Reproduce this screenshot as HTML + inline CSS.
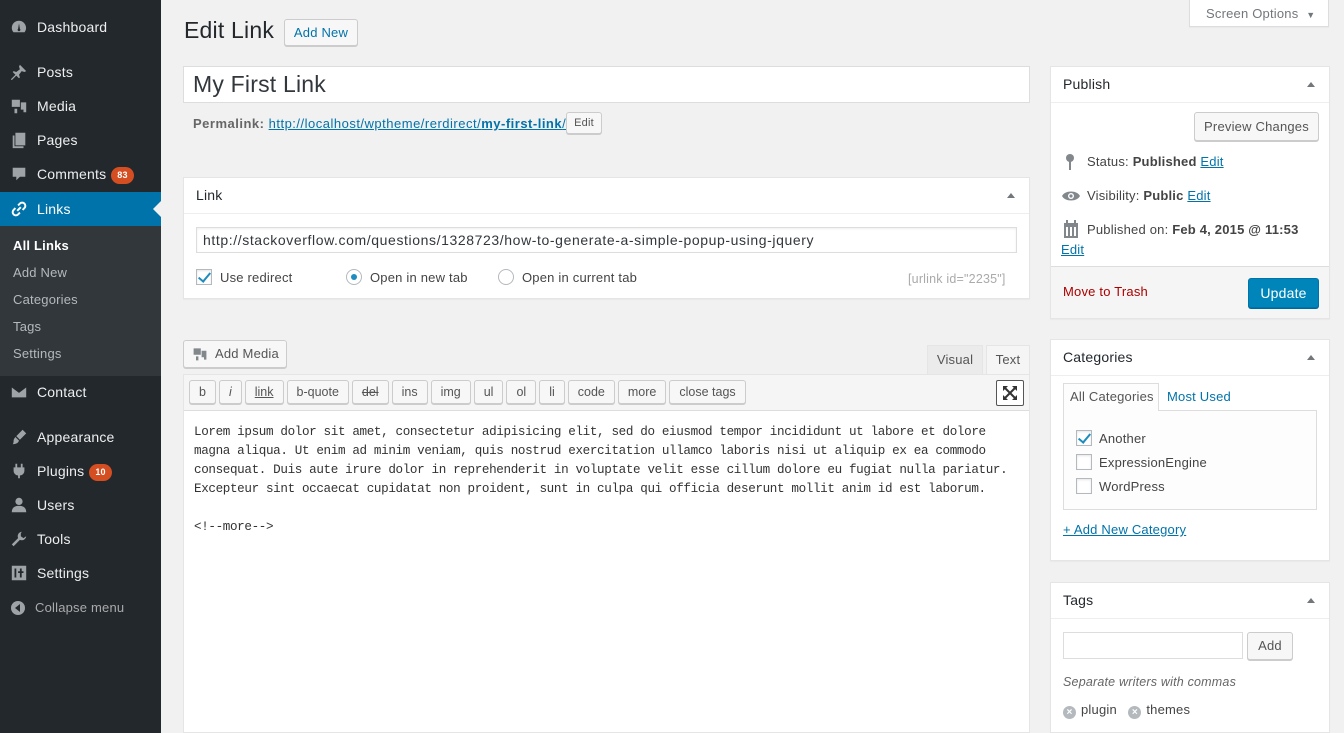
<!DOCTYPE html>
<html><head><meta charset="utf-8"><style>
*{box-sizing:border-box;margin:0;padding:0}
html,body{width:1344px;height:733px;overflow:hidden}
body{background:#f1f1f1;font-family:"Liberation Sans",sans-serif;font-size:13px;color:#444;position:relative;letter-spacing:.2px}
.a{position:absolute}
#side{left:0;top:0;width:161px;height:733px;background:#23282d}
.mi{position:absolute;left:0;width:161px;color:#eee;font-size:14px;height:34px;line-height:34px;padding-left:37px}
.ic{position:absolute;left:10px;top:8px;width:18px;height:18px;fill:#9ea3a8}
.sub{position:absolute;left:13px;color:#b4b9be;font-size:13px}
.badge{display:inline-block;background:#d54e21;color:#fff;font-size:9px;font-weight:bold;border-radius:9px;padding:0 6px;line-height:17px;height:17px;margin-left:5px;vertical-align:1px}
.box{position:absolute;background:#fff;border:1px solid #e5e5e5;box-shadow:0 1px 1px rgba(0,0,0,.04)}
.hd{height:36px;border-bottom:1px solid #eee;font-size:14px;color:#23282d;padding:0 12px;line-height:35px;position:relative}
.hd:after{content:"";position:absolute;right:14px;top:15px;border-left:4px solid transparent;border-right:4px solid transparent;border-bottom:5px solid #72777c}
.btn{position:absolute;background:#f7f7f7;border:1px solid #ccc;border-radius:3px;box-shadow:0 1px 0 #ccc;color:#555;text-align:center}
.tb{display:inline-block;height:24px;line-height:22px;border:1px solid #ccc;border-radius:3px;background:#f7f7f7;box-shadow:0 1px 0 #ccc;padding:0 9px;margin-right:3px;font-size:12.5px;color:#555;vertical-align:top;letter-spacing:0}
a{color:#0073aa}
.cb{position:absolute;width:16px;height:16px;border:1px solid #b4b9be;background:#fff;box-shadow:inset 0 1px 2px rgba(0,0,0,.1)}
.cb.on:after{content:"";position:absolute;left:4px;top:0px;width:5px;height:10px;border:solid #1e8cbe;border-width:0 2px 2px 0;transform:rotate(40deg)}
.rd{position:absolute;width:16px;height:16px;border:1px solid #b4b9be;border-radius:50%;background:#fff}
.x{display:inline-block;width:13px;height:13px;border-radius:50%;background:#b4b9be;color:#fff;font-size:10px;line-height:13px;text-align:center;font-weight:bold;vertical-align:-1px;margin-right:5px}
</style></head><body>
<div id="side" class="a">
 <div class="mi" style="top:10px"><svg class="ic" viewBox="0 0 20 20"><path d="M10 3a8 8 0 0 0-8 8c0 2 .7 3.5 1.8 4.8h12.4A8 8 0 0 0 10 3zm0 3l1 6a1.5 1.5 0 1 1-2 0z"/></svg>Dashboard</div>
 <div class="mi" style="top:55px"><svg class="ic" viewBox="0 0 20 20"><path d="M11 2l7 7-2 1-3-1-3 4 1 3-1 1-3-3-5 5-1-1 5-5-3-3 1-1 3 1 4-3-1-3z"/></svg>Posts</div>
 <div class="mi" style="top:89px"><svg class="ic" viewBox="0 0 20 20"><path d="M2 3h9v8H2zM12 6h6v11h-3v-3h-3zM5 13h3v5H5z"/></svg>Media</div>
 <div class="mi" style="top:123px"><svg class="ic" viewBox="0 0 20 20"><path d="M6 2h11v14H6zM3 5h2v12h10v2H3z"/></svg>Pages</div>
 <div class="mi" style="top:157px"><svg class="ic" viewBox="0 0 20 20"><path d="M3 3h14v10h-6l-4 4v-4H3z"/></svg>Comments<span class="badge">83</span></div>
 <div class="mi" style="top:192px;background:#0073aa;color:#fff"><svg class="ic" viewBox="0 0 20 20" style="fill:none;stroke:#fff;stroke-width:2.2"><path d="M8 12l4-4M9 6l2-2a3 3 0 0 1 5 5l-2 2M11 14l-2 2a3 3 0 0 1-5-5l2-2"/></svg>Links</div>
 <div class="a" style="left:153px;top:201px;border-top:8px solid transparent;border-bottom:8px solid transparent;border-right:8px solid #f1f1f1"></div>
 <div class="a" style="left:0;top:226px;width:161px;height:150px;background:#32373c"></div>
 <div class="sub" style="top:238px;color:#fff;font-weight:bold">All Links</div>
 <div class="sub" style="top:265px">Add New</div>
 <div class="sub" style="top:292px">Categories</div>
 <div class="sub" style="top:319px">Tags</div>
 <div class="sub" style="top:346px">Settings</div>
 <div class="mi" style="top:375px"><svg class="ic" viewBox="0 0 20 20"><path d="M2 5h16v11H2zM2 5l8 6 8-6" /></svg>Contact</div>
 <div class="mi" style="top:420px"><svg class="ic" viewBox="0 0 20 20"><path d="M14 2l4 4-7 7-4-4zM6 10l4 4c-1 3-4 4-7 4 1-1 1-3 1-4s1-3 2-4z"/></svg>Appearance</div>
 <div class="mi" style="top:454px"><svg class="ic" viewBox="0 0 20 20"><path d="M6 2h2v4h4V2h2v4h2v4a5 5 0 0 1-5 5v3H9v-3a5 5 0 0 1-5-5V6h2z"/></svg>Plugins<span class="badge">10</span></div>
 <div class="mi" style="top:488px"><svg class="ic" viewBox="0 0 20 20"><circle cx="10" cy="6" r="4"/><path d="M2 18c0-5 3-7 8-7s8 2 8 7z"/></svg>Users</div>
 <div class="mi" style="top:522px"><svg class="ic" viewBox="0 0 20 20"><path d="M13 2a5 5 0 0 0-4 7l-7 7 2 2 7-7a5 5 0 0 0 7-4l-3 2-3-2v-3z"/></svg>Tools</div>
 <div class="mi" style="top:556px"><svg class="ic" viewBox="0 0 20 20"><path d="M2 2h16v16H2zM5 5v10h2V5zM11 5v3h-2v2h2v5h2v-5h2V8h-2V5z" fill-rule="evenodd"/></svg>Settings</div>
 <div class="mi" style="top:591px;font-size:13px;color:#aaa;padding-left:35px"><div class="a" style="left:11px;top:10px;width:14px;height:14px;border-radius:50%;background:#9ea3a8"></div><div class="a" style="left:15px;top:13px;border-top:4px solid transparent;border-bottom:4px solid transparent;border-right:5px solid #23282d"></div>Collapse menu</div>
</div>

<div class="a" style="left:1189px;top:-1px;width:140px;height:28px;background:#fff;border:1px solid #ddd;box-shadow:0 1px 1px rgba(0,0,0,.04);color:#72777c;line-height:27px;padding-left:16px">Screen Options <span style="font-size:9px;margin-left:4px">▼</span></div>

<div class="a" style="left:184px;top:17px;font-size:23px;color:#23282d">Edit Link</div>
<div class="btn" style="left:284px;top:19px;width:74px;height:27px;line-height:25px;color:#0073aa;border-color:#ccc;font-size:13px">Add New</div>

<div class="a" style="left:183px;top:66px;width:847px;height:37px;background:#fff;border:1px solid #ddd;font-size:23px;color:#32373c;padding-left:9px;line-height:35px">My First Link</div>
<div class="a" style="left:193px;top:116px;color:#666;font-size:13px;letter-spacing:.5px"><b>Permalink:</b> <a href="#">http://localhost/wptheme/rerdirect/<b>my-first-link</b>/</a></div>
<div class="btn" style="left:566px;top:112px;width:36px;height:22px;line-height:20px;font-size:11px">Edit</div>

<div class="box" style="left:183px;top:177px;width:847px;height:122px">
 <div class="hd">Link</div>
 <div class="a" style="left:12px;top:49px;width:821px;height:26px;border:1px solid #ddd;box-shadow:inset 0 1px 2px rgba(0,0,0,.07);padding-left:6px;line-height:24px;font-size:14px;color:#32373c;letter-spacing:.6px">http://stackoverflow.com/questions/1328723/how-to-generate-a-simple-popup-using-jquery</div>
 <div class="cb on" style="left:12px;top:91px"></div><div class="a" style="left:36px;top:92px">Use redirect</div>
 <div class="rd" style="left:162px;top:91px"><div class="a" style="left:4px;top:4px;width:6px;height:6px;border-radius:50%;background:#1e8cbe"></div></div><div class="a" style="left:186px;top:92px">Open in new tab</div>
 <div class="rd" style="left:314px;top:91px"></div><div class="a" style="left:338px;top:92px">Open in current tab</div>
 <div class="a" style="left:724px;top:94px;color:#aaa;font-size:12.5px">[urlink id="2235"]</div>
</div>

<div class="btn" style="left:183px;top:340px;width:104px;height:28px;line-height:26px;padding-left:31px;text-align:left"><svg class="a" style="left:8px;top:5px" width="16" height="16" viewBox="0 0 20 20" fill="#82878c"><path d="M2 3h9v8H2zM12 6h6v11h-3v-3h-3zM5 13h3v5H5z"/></svg>Add Media</div>
<div class="a" style="left:927px;top:345px;width:56px;height:30px;background:#ebebeb;border:1px solid #e5e5e5;border-bottom:0;line-height:28px;text-align:center;color:#555">Visual</div>
<div class="a" style="left:986px;top:345px;width:44px;height:30px;background:#f5f5f5;border:1px solid #e5e5e5;border-bottom:0;line-height:28px;text-align:center;color:#555">Text</div>
<div class="a" style="left:183px;top:374px;width:847px;height:359px;background:#fff;border:1px solid #e5e5e5">
 <div style="height:36px;background:#f5f5f5;border-bottom:1px solid #ddd;padding:5px 0 0 5px">
  <span class="tb">b</span><span class="tb"><i>i</i></span><span class="tb" style="text-decoration:underline">link</span><span class="tb">b-quote</span><span class="tb" style="text-decoration:line-through">del</span><span class="tb">ins</span><span class="tb">img</span><span class="tb">ul</span><span class="tb">ol</span><span class="tb">li</span><span class="tb">code</span><span class="tb">more</span><span class="tb">close tags</span>
 </div>
 <div class="a" style="left:812px;top:5px;width:28px;height:26px;border:1px solid #555;border-radius:2px;background:#fff"><svg width="26" height="24" viewBox="0 0 26 24"><path d="M6 5h5l-5 5zM20 5h-5l5 5zM6 19h5l-5-5zM20 19h-5l5-5z" fill="#333"/><path d="M8 7l10 10M18 7L8 17" stroke="#333" stroke-width="2"/></svg></div>
 <div style="padding:12px 10px;font-family:'Liberation Mono',monospace;font-size:12.6px;line-height:19px;color:#333;letter-spacing:-0.36px;white-space:pre">Lorem ipsum dolor sit amet, consectetur adipisicing elit, sed do eiusmod tempor incididunt ut labore et dolore
magna aliqua. Ut enim ad minim veniam, quis nostrud exercitation ullamco laboris nisi ut aliquip ex ea commodo
consequat. Duis aute irure dolor in reprehenderit in voluptate velit esse cillum dolore eu fugiat nulla pariatur.
Excepteur sint occaecat cupidatat non proident, sunt in culpa qui officia deserunt mollit anim id est laborum.

&lt;!--more--&gt;</div>
</div>

<div class="box" style="left:1050px;top:66px;width:280px;height:253px">
 <div class="hd">Publish</div>
 <div class="btn" style="left:143px;top:45px;width:125px;height:29px;line-height:27px">Preview Changes</div>
 <svg class="a" style="left:12px;top:86px" width="14" height="18" viewBox="0 0 14 18" fill="#82878c"><circle cx="7" cy="5" r="4"/><rect x="6" y="7" width="2" height="10"/></svg>
 <div class="a" style="left:36px;top:87px">Status: <b>Published</b> <a href="#">Edit</a></div>
 <svg class="a" style="left:10px;top:122px" width="20" height="14" viewBox="0 0 20 14"><path d="M1 7c3-6 15-6 18 0-3 6-15 6-18 0z" fill="#82878c"/><circle cx="10" cy="7" r="3" fill="#fff"/><circle cx="10" cy="7" r="1.6" fill="#82878c"/></svg>
 <div class="a" style="left:36px;top:121px">Visibility: <b>Public</b> <a href="#">Edit</a></div>
 <svg class="a" style="left:12px;top:153px" width="16" height="18" viewBox="0 0 16 18" fill="#82878c"><path d="M1 3h14v15H1zM3 7v9h2V7zM7 7v9h2V7zM11 7v9h2V7z" fill-rule="evenodd"/><rect x="3" y="0" width="2" height="4"/><rect x="11" y="0" width="2" height="4"/></svg>
 <div class="a" style="left:36px;top:155px">Published on: <b>Feb 4, 2015 @ 11:53</b></div>
 <div class="a" style="left:10px;top:175px"><a href="#">Edit</a></div>
 <div class="a" style="left:0;top:199px;width:278px;height:52px;background:#f5f5f5;border-top:1px solid #ddd"></div>
 <div class="a" style="left:12px;top:217px;color:#a00">Move to Trash</div>
 <div class="a" style="left:197px;top:211px;width:71px;height:30px;background:#0085ba;border:1px solid #0073aa;border-radius:3px;box-shadow:0 1px 0 #006799;color:#fff;font-size:14px;line-height:28px;text-align:center">Update</div>
</div>

<div class="box" style="left:1050px;top:339px;width:280px;height:222px">
 <div class="hd">Categories</div>
 <div class="a" style="left:12px;top:43px;width:96px;height:28px;border:1px solid #ddd;border-bottom:0;background:#fdfdfd;z-index:2;line-height:26px;padding-left:6px;color:#555">All Categories</div>
 <div class="a" style="left:116px;top:49px;color:#0073aa">Most Used</div>
 <div class="a" style="left:12px;top:70px;width:254px;height:100px;border:1px solid #ddd;background:#fdfdfd"></div>
 <div class="cb on" style="left:25px;top:90px"></div><div class="a" style="left:48px;top:91px">Another</div>
 <div class="cb" style="left:25px;top:114px"></div><div class="a" style="left:48px;top:115px">ExpressionEngine</div>
 <div class="cb" style="left:25px;top:138px"></div><div class="a" style="left:48px;top:139px">WordPress</div>
 <div class="a" style="left:12px;top:182px"><a href="#">+ Add New Category</a></div>
</div>

<div class="box" style="left:1050px;top:582px;width:280px;height:151px">
 <div class="hd">Tags</div>
 <div class="a" style="left:12px;top:49px;width:180px;height:27px;border:1px solid #ddd;background:#fff"></div>
 <div class="btn" style="left:196px;top:49px;width:46px;height:28px;line-height:26px">Add</div>
 <div class="a" style="left:12px;top:92px;font-style:italic;color:#666;font-size:12.5px">Separate writers with commas</div>
 <div class="a" style="left:12px;top:119px"><span class="x">×</span>plugin &nbsp; <span class="x">×</span>themes</div>
</div>
</body></html>
